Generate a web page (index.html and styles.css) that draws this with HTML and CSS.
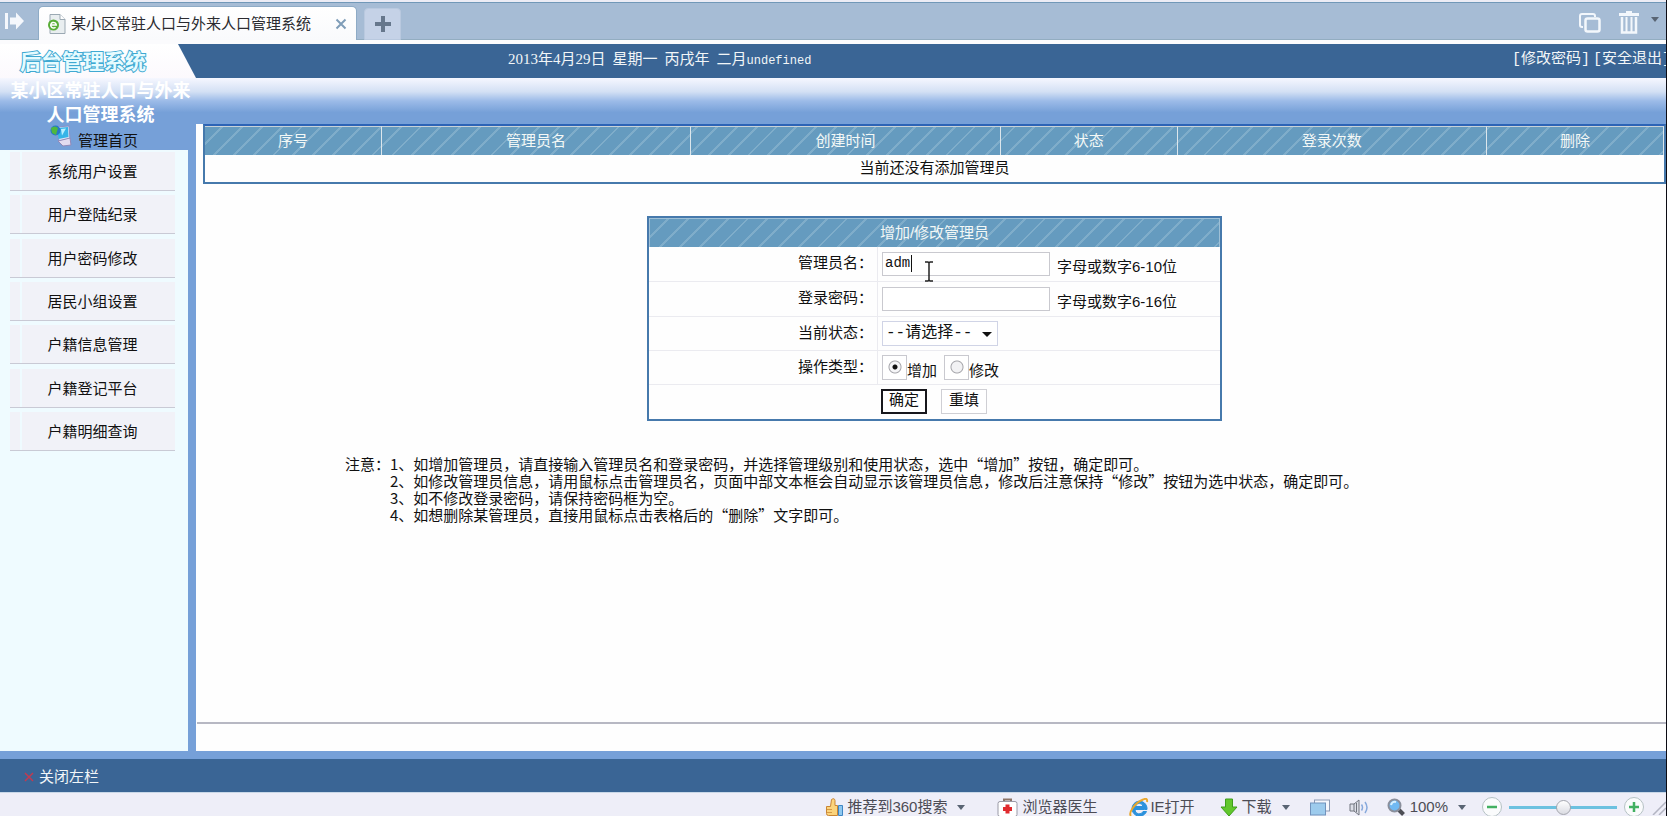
FILE: index.html
```html
<!DOCTYPE html>
<html lang="zh-CN">
<head>
<meta charset="utf-8">
<title>某小区常驻人口与外来人口管理系统</title>
<link rel="stylesheet" href="styles.css">
</head>
<body>
<div class="browser">
  <div class="tabbar">
    <button class="icon-btn restore" aria-label="展开">
      <svg width="22" height="22" viewBox="0 0 22 22"><path d="M1 3h3v16H1zM6 7.500h6V2.500l8 8.500-8 8.500v-5H6z" fill="#f4f7fc"/></svg>
    </button>
    <div class="tab">
      <svg width="18" height="20" viewBox="0 0 18 20"><path d="M2 .5h10l5 5v14H2z" fill="#e9eef0" stroke="#9ba9b3"/><path d="M12 .5v5h5" fill="#fff" stroke="#9ba9b3"/><circle cx="5.500" cy="11" r="5.500" fill="#58ad36"/><path d="M2.800 11h5.500a2.800 2.800 0 1 0-.8 2.200" fill="none" stroke="#fff" stroke-width="1.500"/></svg>
      <span class="tab-title">某小区常驻人口与外来人口管理系统</span>
      <button class="icon-btn" aria-label="关闭标签">
        <svg width="12" height="12" viewBox="0 0 12 12"><path d="M1.500 1.500l9 9m0-9l-9 9" stroke="#7f9db8" stroke-width="2"/></svg>
      </button>
    </div>
    <button class="new-tab" aria-label="新建标签">
      <svg width="18" height="18" viewBox="0 0 18 18"><path d="M9 1v16M1 9h16" stroke="#66778c" stroke-width="4"/></svg>
    </button>
    <div class="tab-tools">
      <button class="icon-btn" aria-label="窗口">
        <svg width="22" height="20" viewBox="0 0 22 20"><path d="M16 4V3q0-2-2-2H3Q1 1 1 3v9q0 2 2 2h1" fill="none" stroke="#f3f7fc" stroke-width="2"/><rect x="6.500" y="5.500" width="14" height="13" rx="2" fill="none" stroke="#f3f7fc" stroke-width="2.500"/></svg>
      </button>
      <button class="icon-btn" aria-label="清理">
        <svg width="20" height="23" viewBox="0 0 20 23"><path d="M0 2h7V0h6v2h7v3H0z" fill="#f3f7fc"/><path d="M3 6v15.500h14V6" fill="none" stroke="#f3f7fc" stroke-width="2.500"/><path d="M7.500 6v15M12.500 6v15" stroke="#f3f7fc" stroke-width="2"/></svg>
      </button>
      <i class="caret"></i>
    </div>
  </div>

  <header class="topbar">
    <div class="logo">后台管理系统</div>
    <div class="date"><span>2013年4月29日</span><span>星期一</span><span>丙戌年</span><span>二月<span class="mono">undefined</span></span></div>
    <nav class="account"><a href="#">[修改密码]</a><a href="#">[安全退出]</a></nav>
  </header>
  <div class="band"><h1 class="system-name">某小区常驻人口与外来人口管理系统</h1></div>

  <div class="body">
    <aside class="sidebar">
      <a class="home" href="#">
        <svg width="22" height="22" viewBox="0 0 22 22"><path d="M6 2l13-1 1 13-11 2z" fill="#dfe5f5" stroke="#8a90c4"/><path d="M7 3l11-1 .5 10-10 2z" fill="#36b4e8"/><path d="M11 4l5-.5-4 7z" fill="#b8efff"/><path d="M8 16l12-3 1 7-8 1z" fill="#e3dcf0" stroke="#9289b8"/><circle cx="5.500" cy="5.500" r="5" fill="#2677c9"/><path d="M1 3q4-3 7 0l-2 7-4-2z" fill="#4fb83e"/></svg>
        <span>管理首页</span>
      </a>
      <nav class="menu">
        <a href="#">系统用户设置</a>
        <a href="#">用户登陆纪录</a>
        <a href="#">用户密码修改</a>
        <a href="#">居民小组设置</a>
        <a href="#">户籍信息管理</a>
        <a href="#">户籍登记平台</a>
        <a href="#">户籍明细查询</a>
      </nav>
    </aside>

    <main class="main">
      <div class="content">
        <table class="admins">
          <colgroup><col class="narrow"><col class="wide"><col class="wide"><col class="narrow"><col class="wide"><col class="narrow"></colgroup>
          <thead><tr><th>序号</th><th>管理员名</th><th>创建时间</th><th>状态</th><th>登录次数</th><th>删除</th></tr></thead>
          <tbody><tr><td colspan="6">当前还没有添加管理员</td></tr></tbody>
        </table>

        <form class="editor">
          <h2 class="editor-title">增加/修改管理员</h2>
          <div class="row tall">
            <label class="name" for="user">管理员名：</label>
            <div class="field">
              <span class="textbox"><input id="user" type="text" value="adm"><i class="text-caret"></i>
                <svg class="pointer" width="10" height="21" viewBox="0 0 10 21"><path d="M1 1h3l1 1 1-1h3M5 2v17M1 20h3l1-1 1 1h3" fill="none" stroke="#222" stroke-width="1.500"/></svg>
              </span>
              <span class="hint">字母或数字6-10位</span>
            </div>
          </div>
          <div class="row tall">
            <label class="name" for="pass">登录密码：</label>
            <div class="field"><span class="textbox"><input id="pass" type="password"></span><span class="hint">字母或数字6-16位</span></div>
          </div>
          <div class="row">
            <label class="name" for="state">当前状态：</label>
            <div class="field"><span class="picker"><select id="state"><option>--请选择--</option></select></span></div>
          </div>
          <div class="row">
            <span class="name">操作类型：</span>
            <div class="field">
              <input id="add" type="radio" name="op" checked><label class="op" for="add">增加</label>
              <input id="edit" type="radio" name="op"><label class="op" for="edit">修改</label>
            </div>
          </div>
          <div class="row actions">
            <span class="name"></span>
            <div class="field"><button class="btn primary" type="submit">确定</button><button class="btn" type="reset">重填</button></div>
          </div>
        </form>

        <div class="notes">
          <span>注意：</span>
          <div>
            <p>1、如增加管理员，请直接输入管理员名和登录密码，并选择管理级别和使用状态，选中“增加”按钮，确定即可。</p>
            <p>2、如修改管理员信息，请用鼠标点击管理员名，页面中部文本框会自动显示该管理员信息，修改后注意保持“修改”按钮为选中状态，确定即可。</p>
            <p>3、如不修改登录密码，请保持密码框为空。</p>
            <p>4、如想删除某管理员，直接用鼠标点击表格后的“删除”文字即可。</p>
          </div>
        </div>
      </div>
      <div class="main-foot"></div>
    </main>
  </div>

  <footer class="footer">
    <button class="close-left">
      <svg width="10" height="10" viewBox="0 0 10 10"><path d="M1 1l8 8m0-8L1 9" stroke="#c23a50" stroke-width="1.500"/></svg>
      关闭左栏
    </button>
  </footer>

  <div class="status">
    <button class="tool recommend">
      <svg width="18" height="19" viewBox="0 0 18 19"><path d="M1.500 8.500h4l1-7q3-2 3.500 1v5h2.500v10h-9q-2 0-2-2z" fill="#fbd47c" stroke="#c98534"/><path d="M2 11.500h5M2 14.500h5" stroke="#d69844"/><path d="M13.500 7.500h4v10h-4z" fill="#8ec8f0" stroke="#3f86c4"/></svg>
      推荐到360搜索<i class="caret"></i>
    </button>
    <button class="tool doctor">
      <svg width="21" height="19" viewBox="0 0 21 19"><path d="M7 4V1.500h7V4" fill="none" stroke="#8c7468" stroke-width="2"/><rect x="1" y="3.500" width="19" height="15" rx="2" fill="#fff" stroke="#9a9aa6"/><path d="M10.500 6.500v9M6 11h9" stroke="#e02a2e" stroke-width="4"/></svg>
      浏览器医生
    </button>
    <button class="tool ie">
      <svg width="20" height="19" viewBox="0 0 20 19"><path d="M15.500 11.500H6a4.200 4.200 0 0 0 8 2h3.500A7.500 7.500 0 1 1 18 11.500zM6.500 8.500h7.500a3.800 3.800 0 0 0-7.500 0z" fill="#2b91dc" stroke="#2b91dc" fill-rule="evenodd"/><path d="M2 18C-1 15 6 5 13 2q6-3 5 2" fill="none" stroke="#e9a72c" stroke-width="2"/></svg>
      IE打开
    </button>
    <button class="tool download">
      <svg width="18" height="19" viewBox="0 0 18 19"><path d="M5.500 1h7v8H17l-8 9-8-9h4.500z" fill="#62c72d" stroke="#3f9e1c"/></svg>
      下载<i class="caret"></i>
    </button>
    <button class="tool windows" aria-label="窗口">
      <svg width="20" height="17" viewBox="0 0 20 17"><rect x="4.500" y="1" width="15" height="11" fill="#f5f7fd" stroke="#8d9bb5"/><rect x=".5" y="4" width="15" height="12" fill="#9dcbed" stroke="#7193bd"/></svg>
    </button>
    <button class="tool sound" aria-label="声音">
      <svg width="20" height="17" viewBox="0 0 20 17"><path d="M1 5h4l5-4v15l-5-4H1z" fill="#dddfe8" stroke="#70747e"/><path d="M5 5v7M7.500 4v9" stroke="#70747e"/><path d="M12.500 5.500q2 3 0 6M16 3q4 5.500 0 11" fill="none" stroke="#87a9dc" stroke-width="1.500"/></svg>
    </button>
    <button class="tool zoom-level">
      <svg width="18" height="18" viewBox="0 0 18 18"><path d="M12 12l4.500 4.500" stroke="#4d4e56" stroke-width="4"/><circle cx="7.500" cy="7.500" r="6" fill="#70b9f2" stroke="#8a8f9c" stroke-width="2"/><path d="M4 7q1-4 5-3" fill="none" stroke="#d7f0ff" stroke-width="2"/></svg>
      100%<i class="caret"></i>
    </button>
    <button class="tool round" aria-label="缩小"><svg width="20" height="20" viewBox="0 0 20 20"><circle cx="10" cy="10" r="9.500" fill="#fafbfc" stroke="#b6c2c4"/><path d="M5 10h10" stroke="#42b061" stroke-width="2.500"/></svg></button>
    <input class="slider" type="range" min="0" max="100" value="50" aria-label="缩放">
    <button class="tool round" aria-label="放大"><svg width="20" height="20" viewBox="0 0 20 20"><circle cx="10" cy="10" r="9.500" fill="#fafbfc" stroke="#b6c2c4"/><path d="M5 10h10M10 5v10" stroke="#42b061" stroke-width="2.500"/></svg></button>
    <svg class="grip" width="14" height="16" viewBox="0 0 14 16"><path d="M1 16L14 3M7 16l7-7" stroke="#b3b5c2" stroke-width="1.500"/></svg>
  </div>
</div>
</body>
</html>
```
FILE: styles.css
```css
* { box-sizing: border-box; }
body {
  margin: 0;
  font: 15px/18px "Liberation Sans", "Noto Sans CJK SC", sans-serif;
  color: #111;
  background: #fefefe;
}
a { color: inherit; text-decoration: none; }
button, input, select { font: inherit; color: inherit; }
button { border: 0; background: none; padding: 0; }
h1, h2, p { margin: 0; font-weight: 400; }
svg { display: block; flex: none; }

.browser {
  display: flex;
  flex-direction: column;
  min-height: 100vh;
  border-right: 1px solid #0c0c14;
  overflow: hidden;
}
.caret {
  border: 4px solid transparent;
  border-top: 5px solid #596473;
  border-bottom: 0;
}

/* Browser tab strip */
.tabbar {
  display: flex;
  align-items: flex-end;
  height: 44px;
  padding-left: 4px;
  background: #a6bcd5;
  border-top: 2px solid #ececf5;
  border-bottom: 4px solid #fbfbfd;
  box-shadow: inset 0 1px #7198b8, inset 0 -1px #93adc1;
}
.icon-btn { display: flex; }
.restore { align-self: center; margin-right: 12px; }
.tab {
  display: flex;
  align-items: center;
  gap: 5px;
  width: 319px;
  height: 34px;
  padding: 0 9px;
  background: linear-gradient(#fff, #f9fafc);
  border: 1px solid #8eabc6;
  border-bottom: 0;
  border-radius: 5px 5px 0 0;
}
.tab-title { flex: 1; white-space: nowrap; color: #2b2b30; }
.new-tab {
  display: flex;
  align-items: center;
  justify-content: center;
  width: 37px;
  height: 32px;
  margin-left: 7px;
  background: #c5d2e7;
  border: 1px solid #b9c9df;
  border-radius: 4px 4px 0 0;
}
.tab-tools {
  display: flex;
  align-self: center;
  align-items: center;
  gap: 18px;
  margin-left: auto;
  padding-right: 7px;
}
.tab-tools .caret { margin: 0 0 4px -6px; }
.tab-tools .icon-btn { padding-top: 3px; }

/* Page header */
.topbar {
  display: flex;
  align-items: center;
  height: 34px;
  color: #f2f6f8;
  background: #3a6595;
  white-space: nowrap;
}
.logo {
  width: 196px;
  height: 34px;
  padding-left: 20px;
  font-size: 21px;
  line-height: 35px;
  font-weight: 700;
  color: #e6fbff;
  -webkit-text-stroke: 2px #3fa9d2;
  paint-order: stroke fill;
  background: linear-gradient(#fff, #fcf9fd);
  clip-path: polygon(0 0, 178px 0, 196px 100%, 0 100%);
}
.date {
  display: flex;
  gap: 7px;
  margin-left: 312px;
  padding-bottom: 3px;
  font-family: "Liberation Serif", "Noto Sans CJK SC", serif;
}
.mono { font-family: "Liberation Mono", monospace; font-size: 12px; }
.account {
  display: flex;
  gap: 3px;
  width: 154px;
  margin-left: auto;
  padding-bottom: 3px;
  font-family: "Liberation Mono", "Noto Sans CJK SC", monospace;
  overflow: hidden;
}
.band {
  height: 46px;
  background: linear-gradient(#f6f7ff 0, #d3e0f4 30%, #9cbbe8 50%, #76a0d8 75%, #76a0d8 100%);
}
.system-name {
  width: 187px;
  margin-left: 7px;
  padding-top: 1px;
  font-size: 18px;
  line-height: 24px;
  font-weight: 700;
  color: #fff;
  text-align: center;
}

.body { display: flex; flex: 1; border-bottom: 8px solid #76a0d8; }
.sidebar {
  flex: none;
  width: 196px;
  background: #effbff;
  border-right: 8px solid #76a0d8;
}
.home {
  display: flex;
  align-items: center;
  gap: 6px;
  height: 26px;
  padding-left: 50px;
  background: #76a0d8;
}
.home svg { margin-bottom: 3px; }
.home span { padding-top: 7px; }
.menu {
  display: flex;
  flex-direction: column;
  justify-content: space-between;
  height: 301px;
  padding: 2px 13px 0 10px;
}
.menu a {
  height: 39px;
  line-height: 39px;
  text-align: center;
  background: linear-gradient(90deg, #f1f2f8 10px, #effbff 10px 12px, #f1f2f8 12px);
  border-bottom: 1px solid #c9cad5;
}

.main { display: flex; flex: 1; flex-direction: column; min-width: 0; }
.content { flex: 1; padding-left: 7px; }
.main-foot { height: 29px; margin-left: 1px; border-top: 2px solid #b7b8c3; }

/* Administrator list */
.admins {
  width: 100%;
  table-layout: fixed;
  border-collapse: separate;
  border-spacing: 0;
  border: 2px solid #4679ac;
  border-top-color: #2d64b6;
  text-align: center;
}
.narrow { width: 12%; }
.wide { width: 21%; }
.admins th, .admins td { padding: 0; }
.admins th {
  height: 29px;
  font-weight: 400;
  color: #f3f8f6;
  border-top: 1px solid #c8d2d8;
  border-right: 1px solid #dce6ec;
}
.admins thead, .editor-title {
  background: repeating-linear-gradient(135deg, #659bbf 0 12px, #7fadca 12px 14px);
}
.admins td { height: 27px; padding-bottom: 1px; }

/* Add / edit form */
.editor {
  width: 575px;
  margin: 32px auto 0;
  border: 2px solid #4679ac;
}
.editor-title {
  font-size: 15px;
  line-height: 28px;
  color: #f3f8f6;
  text-align: center;
  border: 1px solid #9fc0d6;
  border-bottom: 0;
}
.row { display: flex; height: 34px; border-bottom: 1px solid #ebebf0; }
.row.tall { height: 35px; }
.row:last-child { border: 0; }
.name {
  width: 229px;
  padding: 7px 4px 0 0;
  text-align: right;
  border-right: 1px solid #ebebf0;
}
.actions .name { border-color: transparent; }
.field { display: flex; align-items: center; padding-left: 4px; }
.actions .field { padding: 0 0 2px 3px; }
.textbox { position: relative; }
.textbox input {
  display: block;
  width: 168px;
  height: 24px;
  padding: 0 2px 2px;
  font-family: "Liberation Mono", monospace;
  font-size: 14px;
  border: 1px solid #c9c9cf;
  background: #fff;
}
.text-caret {
  position: absolute;
  left: 29px;
  top: 3px;
  height: 17px;
  border-left: 1px solid #111;
}
.pointer { position: absolute; left: 42px; top: 9px; }
.hint { padding: 5px 0 0 7px; }
.picker { position: relative; }
.picker select {
  display: block;
  appearance: none;
  width: 116px;
  height: 25px;
  padding: 0 3px 2px;
  font-family: "Liberation Mono", "Noto Sans CJK SC", monospace;
  font-size: 16px;
  background: #fff;
  border: 1px solid #d0d4e6;
  border-radius: 0;
}
.picker::after {
  content: "";
  position: absolute;
  right: 6px;
  top: 11px;
  border: 5px solid transparent;
  border-top-color: #111;
  border-bottom: 0;
}
.field input[type="radio"] {
  appearance: none;
  width: 25px;
  height: 25px;
  margin: 0;
  border: 1px solid #c9c9cf;
  background: radial-gradient(circle at 12px 11px, #f2f2f4 5px, #a5a5aa 6px, #fff 7px);
}
.field input[type="radio"]:checked {
  background: radial-gradient(circle at 12px 11px, #111 2px, #f6f6f8 3px 5px, #a5a5aa 6px, #fff 7px);
}
.op { padding-top: 7px; }
.field .op + input[type="radio"] { margin-left: 7px; }
.btn {
  width: 46px;
  height: 25px;
  padding-bottom: 3px;
  border: 1px solid #cfcfd4;
  background: #fff;
}
.btn.primary { margin-right: 14px; border: 2px solid #17171c; }

.notes {
  display: flex;
  margin: 34px 0 0 142px;
  font-family: "Noto Sans CJK SC", sans-serif;
  line-height: 17px;
  white-space: nowrap;
}

/* Page footer and browser status bar */
.footer {
  display: flex;
  align-items: center;
  height: 33px;
  padding: 2px 0 0 24px;
  color: #f2f6f8;
  background: #3a6595;
}
.close-left { display: flex; align-items: center; gap: 5px; }
.status {
  display: flex;
  align-items: center;
  justify-content: flex-end;
  height: 24px;
  padding-top: 5px;
  color: #4c4c55;
  background: #eeeef8;
  border-top: 1px solid #c9d8e8;
  white-space: nowrap;
}
.tool { display: flex; align-items: center; gap: 4px; }
.tool .caret { margin-left: 6px; }
.recommend, .doctor { margin-right: 32px; }
.ie { gap: 1px; margin-right: 25px; }
.download { margin-right: 20px; }
.windows { margin-right: 19px; }
.sound { margin-right: 20px; }
.zoom-level { margin-right: 16px; }
.zoom-level svg { margin-left: -2px; margin-right: 1px; }
.slider {
  appearance: none;
  width: 108px;
  height: 16px;
  margin: 0 7px;
  background: linear-gradient(#6cc1e0, #6cc1e0) center / 100% 3px no-repeat;
}
.slider::-webkit-slider-thumb {
  appearance: none;
  width: 15px;
  height: 15px;
  border: 1px solid #a3a5ad;
  border-radius: 50%;
  background: linear-gradient(#fff, #dadbe2);
}
.grip { margin-left: 8px; }
```
